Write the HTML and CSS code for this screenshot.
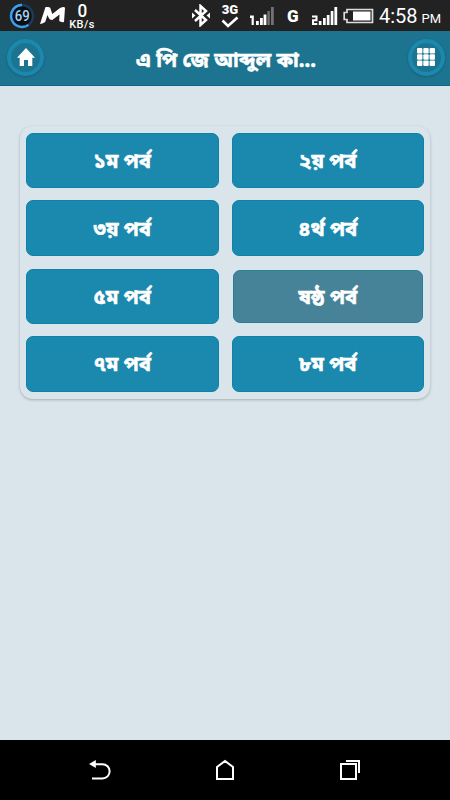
FILE: index.html
```
<!DOCTYPE html>
<html lang="bn">
<head>
    <meta charset="UTF-8">
    <meta name="viewport" content="width=device-width, initial-scale=1.0">
    <title>এ পি জে আব্দুল কালাম</title>
    <link rel="stylesheet" href="styles.css">
</head>
<body>
    <div class="statusbar">
        <div class="left">
            <svg class="ring" width="26" height="26" viewBox="0 0 26 26">
                <circle cx="13" cy="13" r="12" fill="#0c1015"/>
                <circle cx="13" cy="13" r="11" fill="none" stroke="#173e60" stroke-width="2.4"/>
                <path d="M19.5 21.9A11 11 0 1 1 13 2" fill="none" stroke="#3ba0ee" stroke-width="2.4"/>
                <text x="13.3" y="17.8" text-anchor="middle" textLength="15" lengthAdjust="spacingAndGlyphs">69</text>
            </svg>
            <svg class="logo-m" width="26" height="20" viewBox="0 0 26 20">
                <path d="M0 18L5.5 1Q10 .5 10.3 2L12.3 8L20 2Q24.5 0 25 2L24 16Q21 16.5 19.2 15L19.5 8.5L12.3 14Q9.5 14 8.8 12L7.5 9L5.2 16Q2 18 0 18Z" fill="#fff"/>
            </svg>
            <div class="speed">
                <span class="value">0</span>
                <span class="unit">KB/s</span>
            </div>
        </div>
        <div class="right">
            <svg class="bluetooth" width="20" height="23" viewBox="0 0 20 23" fill="none" stroke="#fff" stroke-width="2.5">
                <path d="M4 6L15 16L9.5 21V2L15 7L4 17"/>
                <path d="M1 8.5L4.5 11.5L1 14.5ZM19 8.5L15.5 11.5L19 14.5Z" fill="#fff" stroke="none"/>
            </svg>
            <div class="net">
                <span>3G</span>
                <svg width="18" height="12" viewBox="0 0 18 12"><path d="M1.5 4.5L7 10L16.5 1.5" fill="none" stroke="#fff" stroke-width="2.6"/></svg>
            </div>
            <svg class="signal" width="25" height="20" viewBox="0 0 25 20" fill="#fff">
                <path d="M1 9.5H4.8V19H2.6V12H1Z"/>
                <path d="M7 15H9.8V19H7ZM11 12H13.8V19H11ZM14.6 8.5H17.4V19H14.6Z"/>
                <path d="M18.4 5H20.8V19H18.4ZM22 1H24.8V19H22Z" fill="#727272"/>
            </svg>
            <span class="g">G</span>
            <svg class="signal-two" width="27" height="20" viewBox="0 0 27 20" fill="#fff">
                <path d="M1 10.5H5.5V14.3H2V18H6.3" fill="none" stroke="#fff" stroke-width="2"/>
                <path d="M7.8 15H10.5V19H7.8ZM12 12H14.7V19H12ZM15.8 9H18.5V19H15.8ZM19.7 5H22.4V19H19.7ZM23.4 1H26.2V19H23.4Z"/>
            </svg>
            <svg class="battery" width="31" height="16" viewBox="0 0 31 16">
                <path d="M4 1.5H29.5V14.5H4V11.5H1.2V4.5H4Z" fill="none" stroke="#ddd" stroke-width="1.7"/>
                <path d="M10 3.5H27.5V12.5H10Z" fill="#fff"/>
            </svg>
            <div class="clock">
                <span>4:58</span>
                <small>PM</small>
            </div>
        </div>
    </div>

    <header class="cabecalho">
        <button class="round">
            <svg width="18" height="18" viewBox="0 0 18 18"><path d="M9 0L18 9.7H15.3V18H11V12H7V18H2.7V9.7H0Z" fill="#fff"/></svg>
        </button>
        <h1>এ পি জে আব্দুল কা...</h1>
        <button class="round">
            <svg width="18" height="18" viewBox="0 0 18 18" fill="#fff">
                <rect x="0" y="0" width="5.4" height="5.4" rx="1"/><rect x="6.3" y="0" width="5.4" height="5.4" rx="1"/><rect x="12.6" y="0" width="5.4" height="5.4" rx="1"/>
                <rect x="0" y="6.3" width="5.4" height="5.4" rx="1"/><rect x="6.3" y="6.3" width="5.4" height="5.4" rx="1"/><rect x="12.6" y="6.3" width="5.4" height="5.4" rx="1"/>
                <rect x="0" y="12.6" width="5.4" height="5.4" rx="1"/><rect x="6.3" y="12.6" width="5.4" height="5.4" rx="1"/><rect x="12.6" y="12.6" width="5.4" height="5.4" rx="1"/>
            </svg>
        </button>
    </header>

    <main class="content">
        <div class="parts">
            <button class="part">১ম পর্ব</button>
            <button class="part">২য় পর্ব</button>
            <button class="part">৩য় পর্ব</button>
            <button class="part">৪র্থ পর্ব</button>
            <button class="part">৫ম পর্ব</button>
            <button class="part pressed">ষষ্ঠ পর্ব</button>
            <button class="part">৭ম পর্ব</button>
            <button class="part">৮ম পর্ব</button>
        </div>
    </main>

    <nav class="navbar">
        <svg width="22" height="22" viewBox="0 0 22 22">
            <path d="M5 5.2H13.5A7 7 0 0 1 13.5 19.5H3" fill="none" stroke="#fff" stroke-width="2"/>
            <path d="M0 5L6.8 1V9Z" fill="#fff"/>
        </svg>
        <svg width="22" height="22" viewBox="0 0 22 22"><path d="M3 8L11 2L19 8V20H3Z" fill="none" stroke="#fff" stroke-width="2"/></svg>
        <svg width="22" height="22" viewBox="0 0 22 22" fill="none" stroke="#fff" stroke-width="2">
            <path d="M2 5H17V20H2Z"/>
            <path d="M7 2H20V14"/>
        </svg>
    </nav>
</body>
</html>
```
FILE: styles.css
```
* {
    box-sizing: border-box;
}

body {
    margin: 0;
    height: 800px;
    display: flex;
    flex-direction: column;
    overflow: hidden;
    background-color: #dae5eb;
    font-family: "Noto Sans Bengali", "Noto Sans", sans-serif;
}

svg {
    display: block;
    flex-shrink: 0;
}

button {
    border: none;
    padding: 0;
    font-family: inherit;
}

/* Android status bar */
.statusbar {
    height: 31px;
    flex-shrink: 0;
    display: flex;
    justify-content: space-between;
    background-color: #222;
    color: #fff;
    font-family: Roboto, sans-serif;
}

.left,
.right {
    display: flex;
    align-items: center;
}

.left {
    padding-left: 9px;
}

.ring text {
    font-size: 14px;
    font-weight: 500;
    fill: #a5d3f4;
}

.logo-m {
    margin-left: 5px;
}

.speed {
    width: 28px;
    height: 31px;
    margin-left: 2px;
    display: flex;
    flex-direction: column;
    align-items: center;
}

.value {
    font-size: 19px;
    line-height: 21px;
    font-weight: 500;
    transform: scaleX(0.9);
}

.unit {
    font-size: 11px;
    line-height: 8px;
    font-weight: 500;
    letter-spacing: 0.4px;
}

.net {
    width: 18px;
    margin-left: 10px;
    display: flex;
    flex-direction: column;
    align-items: center;
    gap: 1px;
}

.net span {
    font-size: 13px;
    line-height: 11px;
    font-weight: 900;
}

.signal {
    margin-left: 10px;
}

.g {
    width: 11px;
    margin-left: 13px;
    margin-right: 1px;
    font-size: 17px;
    line-height: 20px;
    font-weight: 900;
}

.signal-two {
    margin-left: 12px;
}

.battery {
    margin-left: 5px;
}

.clock {
    width: 71px;
    margin-left: 5px;
    padding-top: 1px;
    display: flex;
    align-items: baseline;
    gap: 4px;
    font-size: 20px;
    line-height: 24px;
}

.clock small {
    font-size: 13px;
    line-height: 16px;
}

/* App header */
.cabecalho {
    height: 55px;
    flex-shrink: 0;
    padding: 0 5px 2px 7px;
    display: flex;
    justify-content: space-between;
    align-items: center;
    background-color: #1d7491;
    border-bottom: 1px solid #126580;
}

.cabecalho h1 {
    margin: 0;
    padding-top: 9px;
    font-size: 20.4px;
    line-height: 30px;
    font-weight: 700;
    color: #fff;
    white-space: nowrap;
    -webkit-text-stroke: 0.5px #fff;
}

.round {
    width: 37px;
    height: 37px;
    display: flex;
    align-items: center;
    justify-content: center;
    border: 4px solid #1b88ae;
    border-radius: 50%;
    background-color: #1d7491;
    box-shadow: 0 1px 3px rgba(0, 0, 0, 0.2);
}

.content {
    flex: 1;
    padding: 40px 20px;
}

.parts {
    height: 273px;
    padding: 7px 6px;
    display: grid;
    grid-template-columns: repeat(2, 1fr);
    grid-template-rows: 55px 56px 55px 56px;
    row-gap: 12.33px;
    column-gap: 13px;
    border-radius: 13px;
    box-shadow: 0 1px 3px rgba(0, 0, 0, 0.25);
}

.part {
    padding-top: 5px;
    border: 1px solid #0d82ab;
    border-radius: 7px;
    background-color: #1b88ae;
    color: #fff;
    font-size: 20.3px;
    line-height: 28px;
    font-weight: 700;
    -webkit-text-stroke: 0.5px #fff;
}

.part.pressed {
    margin: 1px;
    background-color: #478398;
    border-color: #278097;
}

/* Android navigation keys */
.navbar {
    height: 60px;
    flex-shrink: 0;
    padding: 0 89px;
    display: flex;
    justify-content: space-between;
    align-items: center;
    background-color: #000;
}
```
